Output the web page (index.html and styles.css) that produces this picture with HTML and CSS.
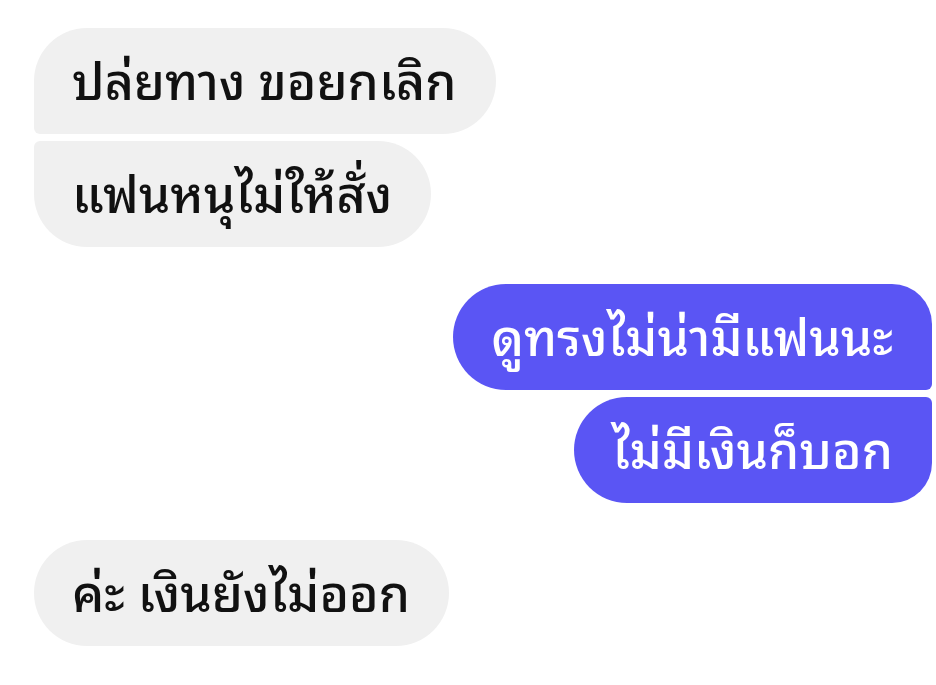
FILE: index.html
```html
<!DOCTYPE html>
<html lang="th">
<head>
<meta charset="utf-8">
<link rel="stylesheet" href="styles.css">
</head>
<body>
<div class="chat">
  <div class="group in">
    <div class="bubble first">ปล่ยทาง ขอยกเลิก</div>
    <div class="bubble last">แฟนหนุไม่ให้สั่ง</div>
  </div>
  <div class="group out">
    <div class="bubble first">ดูทรงไม่น่ามีแฟนนะ</div>
    <div class="bubble last">ไม่มีเงินก็บอก</div>
  </div>
  <div class="group in">
    <div class="bubble single">ค่ะ เงินยังไม่ออก</div>
  </div>
</div>
</body>
</html>
```
FILE: styles.css
```css
html, body {
  margin: 0;
  padding: 0;
  background: #ffffff;
}
.chat {
  width: 936px;
  height: 685px;
  box-sizing: border-box;
  padding: 28px 4px 0 34px;
  display: flex;
  flex-direction: column;
  gap: 37px;
  font-family: "Noto Sans Thai Looped", "Noto Sans", sans-serif;
  font-size: 50px;
  font-weight: 500;
}
.group {
  display: flex;
  flex-direction: column;
  gap: 7px;
}
.group.in { align-items: flex-start; }
.group.out { align-items: flex-end; }
.bubble {
  height: 106px;
  box-sizing: border-box;
  display: flex;
  align-items: center;
  padding: 0 39px 6px 38px;
  line-height: 1;
  white-space: nowrap;
}
.in .bubble {
  background: #f0f0f0;
  color: #111111;
}
.out .bubble {
  background: #5a55f4;
  color: #ffffff;
}
.in .bubble.first { border-radius: 53px 53px 53px 6px; }
.in .bubble.last { border-radius: 6px 53px 53px 53px; }
.in .bubble.single { border-radius: 53px; }
.out .bubble.first { border-radius: 53px 40px 6px 53px; }
.out .bubble.last { border-radius: 53px 6px 40px 53px; }
```
